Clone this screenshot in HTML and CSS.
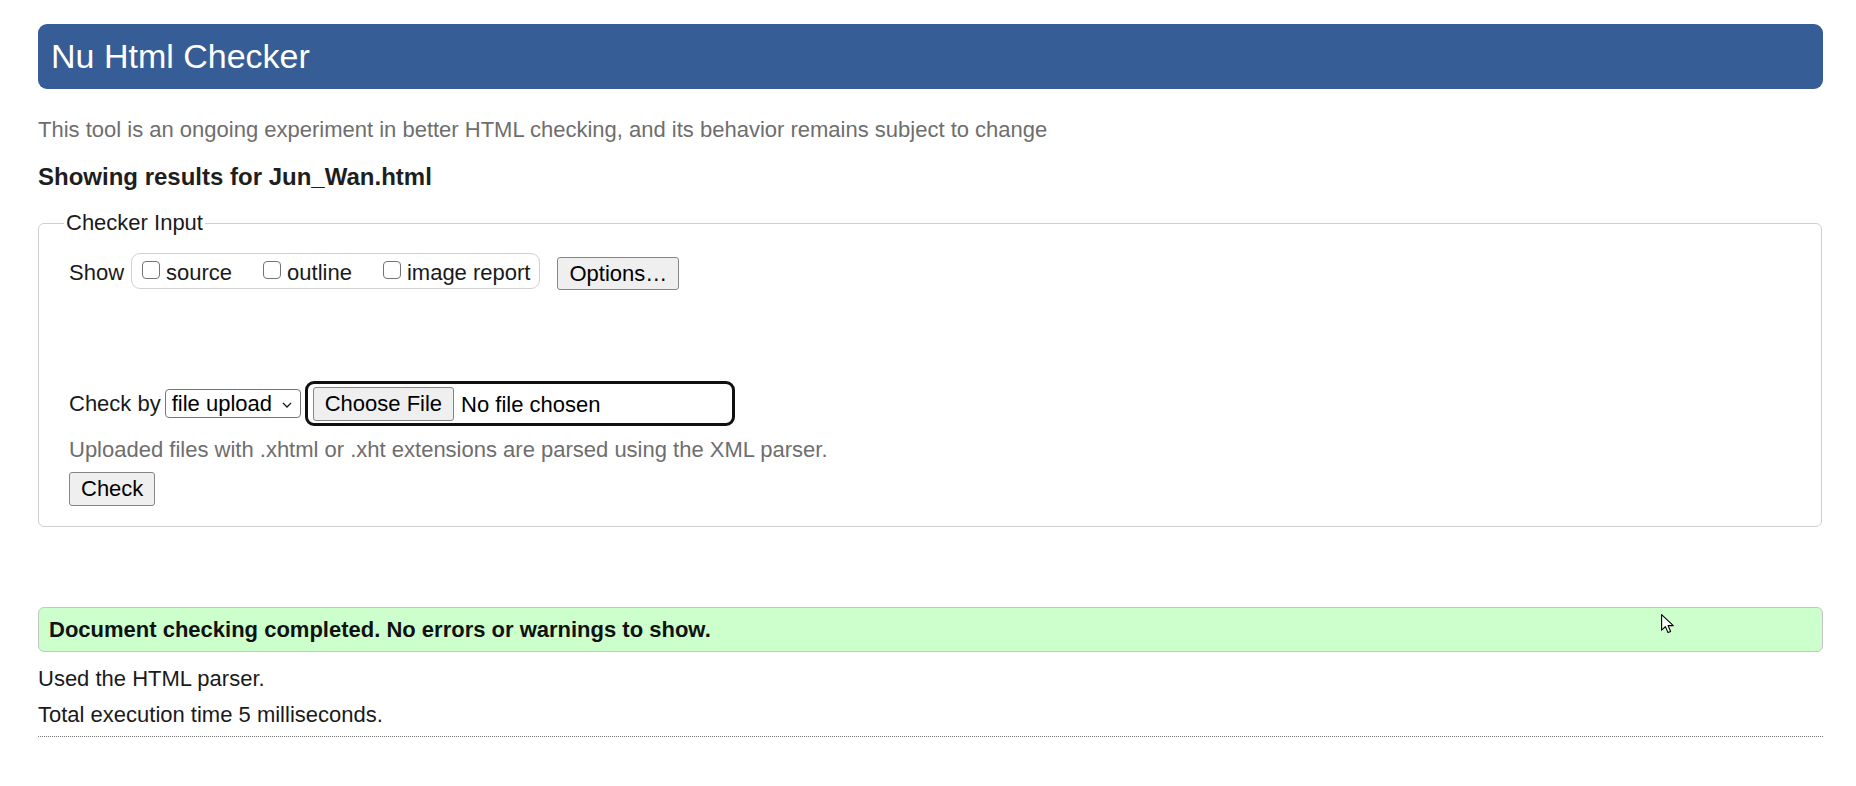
FILE: index.html
```html
<!DOCTYPE html>
<html lang="en">
<head>
<meta charset="utf-8">
<title>Showing results for Jun_Wan.html - Nu Html Checker</title>
<link rel="stylesheet" href="styles.css">
</head>
<body>
  <h1 class="banner">Nu Html Checker</h1>
  <p class="intro">This tool is an ongoing experiment in better HTML checking, and its behavior remains subject to change</p>
  <h2 class="results-title">Showing results for Jun_Wan.html</h2>

  <fieldset class="checker-input">
    <legend class="legend">Checker Input</legend>
    <div class="rows">
      <div class="show-row">
        <span class="show-label">Show</span>
        <div class="show-box">
          <label class="opt"><input type="checkbox" class="cb"><span class="opt-text">source</span></label>
          <label class="opt"><input type="checkbox" class="cb"><span class="opt-text">outline</span></label>
          <label class="opt"><input type="checkbox" class="cb"><span class="opt-text">image report</span></label>
        </div>
        <button type="button" class="btn btn-options">Options…</button>
      </div>

      <div class="checkby-row">
        <span class="checkby-label">Check by</span>
        <span class="select-wrap">
          <select class="select"><option>file upload</option></select>
          <svg class="chevron" width="10" height="6" viewBox="0 0 10 6"><path d="M0.9 0.9 L5 5 L9.1 0.9" fill="none" stroke="#111" stroke-width="1.3"/></svg>
        </span>
        <span class="file-ring">
          <button type="button" class="btn btn-file">Choose File</button>
          <span class="file-name">No file chosen</span>
        </span>
      </div>

      <p class="hint">Uploaded files with .xhtml or .xht extensions are parsed using the XML parser.</p>
      <button type="button" class="btn btn-check">Check</button>
    </div>
  </fieldset>

  <p class="success">Document checking completed. No errors or warnings to show.</p>
  <p class="stat first">Used the HTML parser.</p>
  <p class="stat">Total execution time 5 milliseconds.</p>
  <div class="rule"></div>

  <svg class="cursor" width="14" height="21" viewBox="0 0 14 21"><path d="M0.6 0.6 L0.6 16.2 L4.4 12.6 L7 18.6 L9.6 17.5 L7.1 11.6 L12.3 11.6 Z" fill="#fff" stroke="#000" stroke-width="1.1" stroke-linejoin="round"/></svg>
</body>
</html>
```

FILE: styles.css
```css
html, body {
  background: #ffffff;
}

body {
  margin: 0;
  padding: 24px 33px 0 38px;
  font-family: "Liberation Sans", Arial, Helvetica, sans-serif;
  font-size: 22px;
  line-height: 26px;
  color: #1a1a1a;
}

.banner {
  margin: 0;
  padding: 13px 13px;
  font-size: 34px;
  line-height: 39px;
  font-weight: normal;
  color: #ffffff;
  background: #365d95;
  border-radius: 9px;
}

.intro {
  margin: 28px 0 0;
  color: #6e6e6e;
}

.results-title {
  margin: 20px 0 0;
  font-size: 24px;
  line-height: 28px;
  font-weight: bold;
  color: #1e1e1e;
}

.checker-input {
  margin: 19px 1px 0 0;
  padding: 0 0 20px 25px;
  border: 1px solid #cfcfcf;
  border-radius: 6px;
  min-width: 0;
}

.legend {
  padding: 0 2px;
  font-size: 22px;
  line-height: 26px;
  color: #1a1a1a;
}

.rows {
  padding-left: 5px;
}

.show-row {
  display: flex;
  align-items: flex-start;
  margin-top: 17px;
}

.show-label {
  margin-top: 7px;
  margin-right: 7px;
}

.show-box {
  display: flex;
  align-items: center;
  height: 34px;
  padding: 0 9px 0 10px;
  border: 1px solid #d0d0d0;
  border-radius: 9px;
}

.opt {
  display: flex;
  align-items: center;
  margin-right: 31px;
}

.opt:last-child {
  margin-right: 0;
}

.opt-text {
  padding-top: 4px;
}

.cb {
  appearance: none;
  -webkit-appearance: none;
  box-sizing: border-box;
  width: 18px;
  height: 18px;
  margin: -2px 6px 0 0;
  border: 1.5px solid #747474;
  border-radius: 4px;
  background: #ffffff;
}

.btn {
  font-family: "Liberation Sans", Arial, Helvetica, sans-serif;
  font-size: 22px;
  line-height: 26px;
  color: #000000;
  background: #efefef;
  border: 1px solid #858585;
  border-radius: 3px;
  padding: 3px 11px;
  margin: 0;
}

.btn-options {
  margin-left: 17px;
  margin-top: 4px;
  padding-top: 2.5px;
  padding-bottom: 2.5px;
}

.checkby-row {
  display: flex;
  align-items: flex-start;
  margin-top: 91px;
}

.checkby-label {
  margin-top: 10px;
  margin-right: 4px;
}

.select-wrap {
  position: relative;
  margin-top: 8px;
}

.select {
  appearance: none;
  -webkit-appearance: none;
  display: block;
  box-sizing: border-box;
  width: 136px;
  height: 29px;
  margin: 0;
  padding: 1px 0 0 6px;
  font-family: "Liberation Sans", Arial, Helvetica, sans-serif;
  font-size: 22px;
  line-height: 26px;
  color: #000000;
  background: #ffffff;
  border: 1px solid #767676;
  border-radius: 4px;
}

.chevron {
  position: absolute;
  right: 9px;
  top: 13px;
}

.file-ring {
  display: flex;
  align-items: center;
  box-sizing: border-box;
  width: 430px;
  height: 45px;
  margin-left: 4px;
  padding: 0 5px;
  border: 3px solid #101010;
  border-radius: 9px;
}

.btn-file {
  margin-top: 1px;
}

.file-name {
  margin-left: 7px;
  margin-top: 2px;
  color: #000000;
}

.hint {
  margin: 11px 0 0;
  color: #6e6e6e;
}

.btn-check {
  display: block;
  margin-top: 9px;
}

.success {
  margin: 80px 0 0;
  padding: 8.5px 10px;
  background: #ccffcc;
  border: 1px solid #c4c4c4;
  border-radius: 6px;
  font-weight: bold;
  color: #111111;
}

.stat {
  margin: 10px 0 0;
}

.stat.first {
  margin-top: 14px;
}

.rule {
  margin-top: 8px;
  border-top: 1px dotted #777777;
}

.cursor {
  position: absolute;
  left: 1661px;
  top: 614px;
}
```
